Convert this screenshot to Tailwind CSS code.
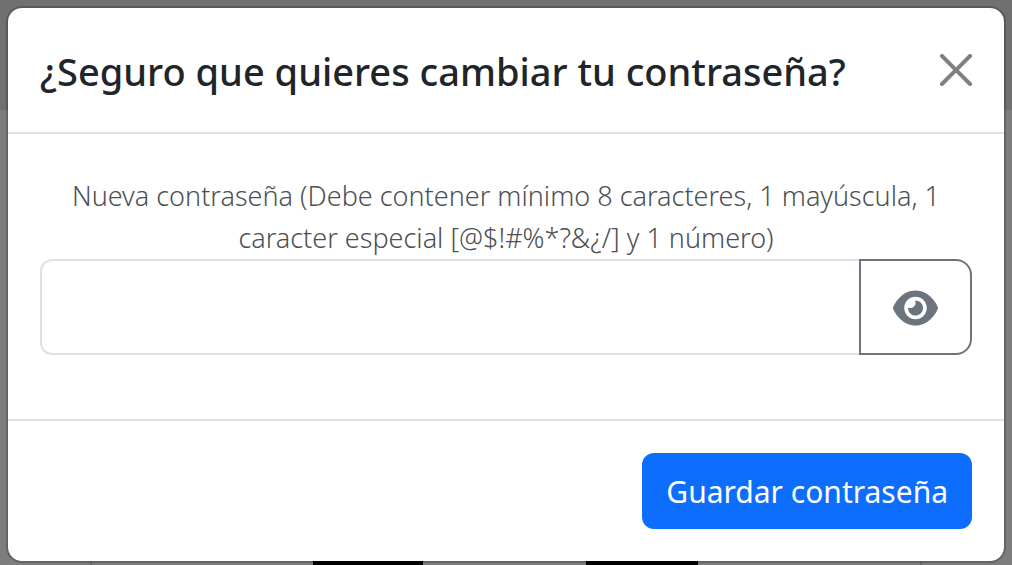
<!DOCTYPE html>
<html lang="es">
<head>
<meta charset="utf-8">
<meta name="viewport" content="width=device-width, initial-scale=1">
<title>Cambiar contraseña</title>
<script src="https://cdn.jsdelivr.net/npm/@tailwindcss/browser@4"></script>
</head>
<body class="relative min-h-screen overflow-x-hidden bg-[#7d7d7d] font-['Segoe_UI','Noto_Sans',sans-serif] text-[#212529]">
  <!-- Dimmed page behind the dialog -->
  <div class="absolute inset-0 overflow-hidden" aria-hidden="true">
    <div class="h-[110px] bg-[#707070]"></div>
    <div class="absolute top-[200px] -bottom-4 left-[90px] right-[90px] border-x-2 border-[#6c6c6c]"></div>
    <div class="absolute -bottom-4 left-[313px] h-10 w-[110px] rounded-xl bg-black"></div>
    <div class="absolute -bottom-4 left-[586px] h-10 w-[112px] rounded-xl bg-black"></div>
  </div>

  <div class="relative p-1.5">
    <section role="dialog" aria-modal="true" aria-labelledby="titulo" class="rounded-2xl border-2 border-black/20 bg-white bg-clip-padding">
      <header class="flex items-center justify-between border-b-2 border-[#dee2e6] p-8">
        <h1 id="titulo" class="whitespace-nowrap pt-0.5 text-[38px] leading-[58px] font-medium">¿Seguro que quieres cambiar tu contraseña?</h1>
        <button type="button" aria-label="Cerrar" class="shrink-0">
          <svg class="size-8" viewBox="0 0 16 16" fill="#808080"><path d="M.293.293a1 1 0 0 1 1.414 0L8 6.586 14.293.293a1 1 0 1 1 1.414 1.414L9.414 8l6.293 6.293a1 1 0 0 1-1.414 1.414L8 9.414l-6.293 6.293a1 1 0 0 1-1.414-1.414L6.586 8 .293 1.707a1 1 0 0 1 0-1.414z"/></svg>
        </button>
      </header>
      <form id="formulario" class="px-8 pt-[41px] pb-16">
        <label for="clave" class="block text-center text-[27px] leading-[42px] font-light text-[#4d5053]">Nueva contraseña (Debe contener mínimo 8 caracteres, 1 mayúscula, 1<br>caracter especial [@$!#%*?&amp;¿/] y 1 número)</label>
        <div class="flex h-24">
          <input id="clave" type="password" class="min-w-0 flex-1 rounded-l-xl border-2 border-r-0 border-[#dee2e6] px-6 text-[32px] outline-none">
          <button type="button" aria-label="Mostrar contraseña" class="flex w-[113px] items-center justify-center rounded-r-2xl border-2 border-[#6c757d] pt-0.5">
            <svg class="h-10 w-[45px]" viewBox="0 0 576 512" fill="#6c757d"><path d="M288 32c-80.800 0-145.500 36.800-192.600 80.600C48.600 156 17.300 208 2.500 243.700c-3.300 7.900-3.300 16.700 0 24.600C17.300 304 48.600 356 95.400 399.400C142.500 443.200 207.200 480 288 480s145.500-36.800 192.600-80.600c46.800-43.500 78.100-95.400 93-131.100c3.300-7.900 3.300-16.700 0-24.600c-14.900-35.700-46.200-87.700-93-131.100C433.500 68.800 368.800 32 288 32zM144 256a144 144 0 1 1 288 0 144 144 0 1 1 -288 0zm144-64c0 35.300-28.700 64-64 64c-7.100 0-13.900-1.200-20.300-3.300c-5.500-1.800-11.900 1.600-11.700 7.400c.3 6.900 1.300 13.800 3.200 20.700c13.700 51.200 66.400 81.600 117.600 67.900s81.600-66.400 67.900-117.600c-11.100-41.500-47.800-69.400-88.600-71.100c-5.800-.2-9.200 6.100-7.400 11.700c2.100 6.400 3.300 13.200 3.300 20.300z"/></svg>
          </button>
        </div>
      </form>
      <footer class="flex justify-end border-t-2 border-[#dee2e6] p-8">
        <button type="submit" form="formulario" class="h-[76px] whitespace-nowrap rounded-xl bg-[#0d6efd] px-6 pt-0.5 text-[30px] leading-[48px] text-white">Guardar contraseña</button>
      </footer>
    </section>
  </div>
</body>
</html>
